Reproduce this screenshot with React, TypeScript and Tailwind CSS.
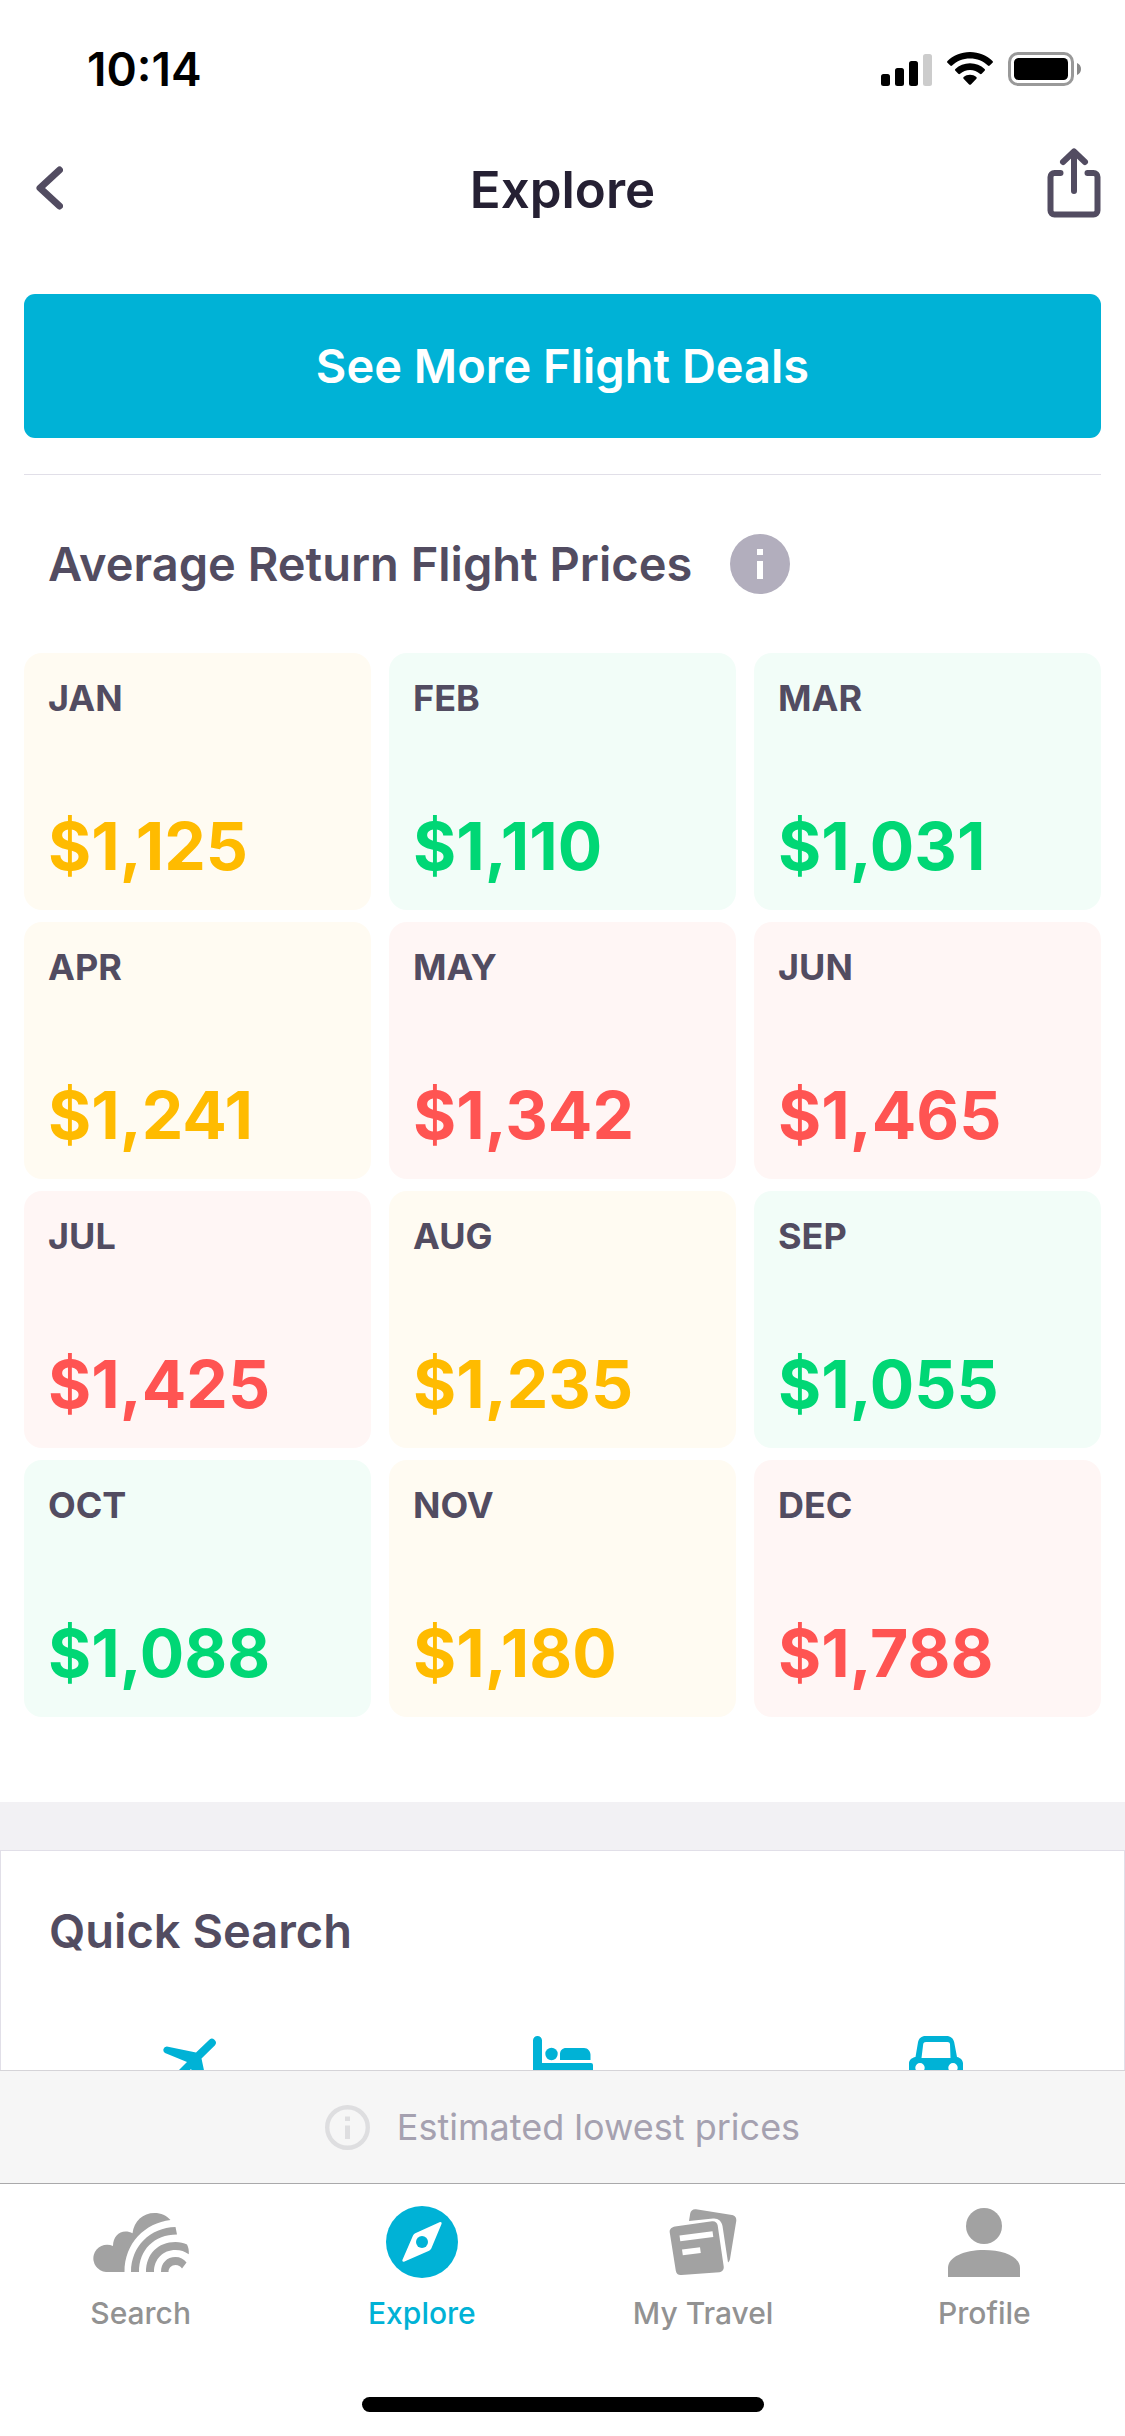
import type { ReactNode } from 'react'

type Tone = 'low' | 'mid' | 'high'

interface MonthPrice {
  month: string
  price: string
  tone: Tone
}

const MONTHS: MonthPrice[] = [
  { month: 'JAN', price: '$1,125', tone: 'mid' },
  { month: 'FEB', price: '$1,110', tone: 'low' },
  { month: 'MAR', price: '$1,031', tone: 'low' },
  { month: 'APR', price: '$1,241', tone: 'mid' },
  { month: 'MAY', price: '$1,342', tone: 'high' },
  { month: 'JUN', price: '$1,465', tone: 'high' },
  { month: 'JUL', price: '$1,425', tone: 'high' },
  { month: 'AUG', price: '$1,235', tone: 'mid' },
  { month: 'SEP', price: '$1,055', tone: 'low' },
  { month: 'OCT', price: '$1,088', tone: 'low' },
  { month: 'NOV', price: '$1,180', tone: 'mid' },
  { month: 'DEC', price: '$1,788', tone: 'high' },
]

const CARD_BG: Record<Tone, string> = {
  low: 'bg-[#f2fdf8]',
  mid: 'bg-[#fffbf2]',
  high: 'bg-[#fff6f5]',
}

const PRICE_COLOR: Record<Tone, string> = {
  low: 'text-[#00d775]',
  mid: 'text-[#ffbb00]',
  high: 'text-[#ff5452]',
}

export default function App() {
  return (
    <div className="flex min-h-screen flex-col bg-white font-['Inter','Liberation_Sans',sans-serif] text-[#524c61]">
      <StatusBar />
      <Header />
      <main className="flex flex-1 flex-col">
        <section className="flex flex-col px-6 pb-[85px]">
          <button
            type="button"
            className="h-36 w-full rounded-[11px] bg-[#00b2d6] text-[47px] leading-[60px] font-semibold text-white"
          >
            See More Flight Deals
          </button>
          <hr className="mt-9 border-t border-[#e1dfe8]" />
          <div className="mt-[59px] flex items-center gap-[38px] px-6">
            <h2 className="text-[47px] leading-[60px] font-semibold">Average Return Flight Prices</h2>
            <button type="button" aria-label="About these prices">
              <InfoSolidIcon />
            </button>
          </div>
          <div className="mt-[59px] grid grid-cols-3 gap-x-[18px] gap-y-3">
            {MONTHS.map((m) => (
              <MonthCard key={m.month} {...m} />
            ))}
          </div>
        </section>
        <div className="h-12 bg-[#f2f1f4]" />
        <QuickSearch />
      </main>
      <div className="flex h-[113px] items-center justify-center gap-[27px] border-t border-[#d5d4d8] bg-[#f6f6f6]">
        <InfoOutlineIcon />
        <p className="text-4xl leading-[44px] text-[#a5a1b0]">Estimated lowest prices</p>
      </div>
      <TabBar />
    </div>
  )
}

function StatusBar() {
  return (
    <div className="flex h-[138px] items-center justify-between pr-[43px] pl-[87px] text-black">
      <span className="text-[46px] leading-[56px] font-semibold">10:14</span>
      <div className="flex items-center gap-[15px]">
        <svg width="51" height="33" viewBox="0 0 51 33">
          <rect x="0" y="21" width="9" height="12" rx="2.5" />
          <rect x="14" y="15" width="9" height="18" rx="2.5" />
          <rect x="28" y="8" width="9" height="25" rx="2.5" />
          <rect x="42" y="1" width="9" height="32" rx="2.5" fill="#ccc" />
        </svg>
        <svg width="46" height="34" viewBox="0 0 46 34">
          <path d="M23 0C14 0 6 3.5.5 9c-.6.6-.6 1.200 0 1.800l2.800 2.800c.6.6 1.200.6 1.800 0C9.800 9.200 16 6.600 23 6.600s13.200 2.600 17.900 7c.6.6 1.200.6 1.800 0l2.800-2.800c.6-.6.6-1.200 0-1.800C40 3.500 32 0 23 0z" />
          <path d="M23 11.300c-5.700 0-10.800 2.100-14.600 5.700-.6.6-.6 1.200 0 1.800l2.900 2.900c.6.6 1.200.6 1.800 0 2.700-2.400 6.100-3.800 9.900-3.800s7.200 1.400 9.900 3.800c.6.6 1.200.6 1.800 0l2.900-2.900c.6-.6.6-1.200 0-1.800-3.800-3.600-8.900-5.700-14.600-5.700z" />
          <path d="M23 22.800c-2.400 0-4.600.8-6.300 2.200-.6.5-.6 1.200-.1 1.800l5.500 5.600c.6.6 1.200.6 1.800 0l5.500-5.600c.5-.6.5-1.300-.1-1.800-1.700-1.400-3.900-2.200-6.300-2.200z" />
        </svg>
        <svg width="74" height="34" viewBox="0 0 74 34">
          <rect x="1.5" y="1.5" width="63" height="31" rx="8.5" fill="none" stroke="#999" strokeWidth="3" />
          <rect x="6" y="6" width="54" height="22" rx="4.5" />
          <path d="M69 11c2.500 1 4 3.300 4 6s-1.500 5-4 6z" fill="#888" />
        </svg>
      </div>
    </div>
  )
}

function Header() {
  return (
    <header className="flex h-[156px] items-start justify-between px-6">
      <button type="button" aria-label="Back" className="flex w-[54px] pt-7 pl-[11px]">
        <svg width="28" height="44" viewBox="0 0 28 44" fill="none" stroke="#524c61" strokeWidth="7" strokeLinecap="round" strokeLinejoin="round">
          <path d="M24.500 4L5 22l19.500 18" />
        </svg>
      </button>
      <h1 className="pt-[22px] text-[51px] leading-[60px] font-semibold text-[#252033]">Explore</h1>
      <button type="button" aria-label="Share" className="flex w-[54px] pt-2.5">
        <svg width="54" height="70" viewBox="0 0 54 70" fill="none" stroke="#524c61" strokeWidth="6" strokeLinecap="round" strokeLinejoin="round">
          <path d="M27 43V4M16 14L27 3.500 38 14M13.500 25H7.500a4 4 0 0 0-4 4v33.500a4 4 0 0 0 4 4h39a4 4 0 0 0 4-4V29a4 4 0 0 0-4-4h-6" />
        </svg>
      </button>
    </header>
  )
}

function MonthCard({ month, price, tone }: MonthPrice) {
  return (
    <div className={`flex h-[257px] flex-col justify-between rounded-[18px] px-6 pt-[23px] pb-[22px] ${CARD_BG[tone]}`}>
      <span className="text-4xl leading-[44px] font-bold">{month}</span>
      <span className={`text-[66px] leading-[84px] font-bold ${PRICE_COLOR[tone]}`}>{price}</span>
    </div>
  )
}

function QuickSearch() {
  return (
    <section className="h-[220px] overflow-hidden border border-b-0 border-[#e1dfe8]">
      <h2 className="px-12 pt-[50px] text-[47px] leading-[60px] font-semibold">Quick Search</h2>
      <div className="mt-[75px] grid grid-cols-3 px-0.5 text-[#00b2d6]">
        <button type="button" aria-label="Flights" className="flex justify-center">
          <PlaneIcon />
        </button>
        <button type="button" aria-label="Hotels" className="flex justify-center">
          <BedIcon />
        </button>
        <button type="button" aria-label="Car hire" className="flex justify-center">
          <CarIcon />
        </button>
      </div>
    </section>
  )
}

function TabBar() {
  return (
    <nav className="flex h-[253px] flex-col border-t border-[#a9a9ab]">
      <div className="grid grid-cols-4">
        <Tab label="Search" icon={<CloudIcon />} />
        <Tab label="Explore" icon={<CompassIcon />} active />
        <Tab label="My Travel" icon={<TripsIcon />} />
        <Tab label="Profile" icon={<ProfileIcon />} />
      </div>
      <div className="mt-auto mb-6 h-[15px] w-[402px] self-center rounded-full bg-black" />
    </nav>
  )
}

function Tab({ label, icon, active = false }: { label: string; icon: ReactNode; active?: boolean }) {
  return (
    <a
      href="#"
      aria-current={active ? 'page' : undefined}
      className={`flex flex-col items-center gap-[17px] pt-[22px] ${active ? 'text-[#00b2d6]' : 'text-[#929292]'}`}
    >
      {icon}
      <span className="text-[30px] leading-9 font-medium">{label}</span>
    </a>
  )
}

function InfoSolidIcon() {
  return (
    <svg width="60" height="60" viewBox="0 0 60 60">
      <circle cx="30" cy="30" r="30" fill="#b2aebd" />
      <path d="M27 15h6v6h-6zM27 27h6v18h-6z" fill="#fff" />
    </svg>
  )
}

function InfoOutlineIcon() {
  return (
    <svg width="45" height="45" viewBox="0 0 45 45" fill="#dedee0">
      <circle cx="22.5" cy="22.5" r="20.3" fill="none" stroke="#dedee0" strokeWidth="4.4" />
      <path d="M20 11.500h5V16h-5zM20 20.500h5V34h-5z" />
    </svg>
  )
}

function PlaneIcon() {
  return (
    <svg width="54" height="54" viewBox="0 0 54 54" fill="currentColor">
      <path d="M45.800 4.200a4 4 0 0 1 6 5.300L38.500 22.500l5.500 26-4 4L28 33 16 44l1 6-3 3-5-9-8-5 3-3 8 2 12-12L2 17a3.600 3.600 0 0 1 1.800-6.600L33 16.500z" />
    </svg>
  )
}

function BedIcon() {
  return (
    <svg width="60" height="48" viewBox="0 0 60 48" fill="currentColor">
      <path d="M0 4.500a4.500 4.500 0 0 1 9 0V27h49a2 2 0 0 1 2 2v19h-8v-9H9v9H0z" />
      <circle cx="18.5" cy="18" r="6.2" />
      <path d="M27 24v-6c0-3.500 2.500-6 6-6h18c4 0 6.500 3.500 6.500 7v5z" />
    </svg>
  )
}

function CarIcon() {
  return (
    <svg width="54" height="54" viewBox="0 0 54 54" fill="currentColor" fillRule="evenodd">
      <path d="M16.500 0h21c4 0 7 2.300 7.700 6.300L48 21c3.500.8 6 3.200 6 6.500V54h-9v-9H9v9H0V27.500C0 24.200 2.500 21.800 6.500 21L9 6.300C9.700 2.300 12.500 0 16.500 0zm.5 6c-1.600 0-2.600.9-2.800 2.300L12.500 22h29L41 8.300C40.800 6.900 40 6 38.400 6zM11 27a4.700 4.700 0 1 0 0 9.400 4.700 4.700 0 0 0 0-9.400zm33 0a4.700 4.700 0 1 0 0 9.400 4.700 4.700 0 0 0 0-9.400z" />
    </svg>
  )
}

function CloudIcon() {
  return (
    <svg width="96" height="72" viewBox="0 0 96 72" fill="#a2a2a2">
      <path d="M13 66A13.700 13.700 0 1 1 20 40C20 31 25.500 25.500 32.500 25.500c2.500 0 5 .6 7 1.800C41 15 50 7 61.500 7c6.500 0 12 2.500 16 7C52 17 31.500 37 31.500 66z" />
      <path d="M38 66C38 40.500 57 21.500 82.500 21L84 28.500C61 28.500 46 44 46 66z" />
      <path d="M53 66c0-18 12-30 29.500-30 4.500 0 8.500 1 11.500 2.500 1.500 3 2 6 1.800 9.800-4-2.800-8-4.300-13.300-4.300C70 44 61 53 61 66z" />
      <path d="M68 66c0-9 6-15 14.500-15 4.500 0 8.500 2 11 5.500L89 62.500c-1.500-2-3.500-3.500-6.500-3.500-4 0-7 3-7 7z" />
    </svg>
  )
}

function CompassIcon() {
  return (
    <svg width="72" height="72" viewBox="0 0 72 72" fill="currentColor">
      <circle cx="36" cy="36" r="36" />
      <path d="M53.500 16.300c1.500-.7 2.600.3 2 1.800L45.500 42c-.6 1.400-1.600 2.400-3 3L18.500 55.600c-1.500.7-2.600-.3-2-1.800L26.800 30c.6-1.400 1.600-2.400 3-3z" fill="#fff" />
      <circle cx="36" cy="36" r="6" />
    </svg>
  )
}

function TripsIcon() {
  return (
    <svg width="72" height="72" viewBox="0 0 72 72" fill="#a2a2a2">
      <path d="M22 15l1.200-7.500C23.700 4.500 26 2.800 29 3.200l36 5.800c3 .5 4.700 2.800 4.300 5.800L63 53c-.3 1.600-.9 2.600-2 3.500L55.500 20c-.8-5-4.500-8-9.500-7.500z" />
      <path d="M8 20.500l37-5.300c3-.4 5.300 1.300 5.700 4.300l6 41c.4 3-1.300 5.300-4.300 5.700L14.500 69c-3 .4-5.300-1.300-5.700-4.300L2.700 26.200c-.4-3 2.300-5.300 5.300-5.700zM12.500 29.500l.8 5.800 33-4.200-.8-5.800zM15 43.500l.8 5.800 18-2.300-.8-5.800z" fillRule="evenodd" />
    </svg>
  )
}

function ProfileIcon() {
  return (
    <svg width="72" height="72" viewBox="0 0 72 72" fill="#a2a2a2">
      <circle cx="36" cy="20" r="18" />
      <path d="M0 71v-9c0-11 16-18 36-18s36 7 36 18v9z" />
    </svg>
  )
}
